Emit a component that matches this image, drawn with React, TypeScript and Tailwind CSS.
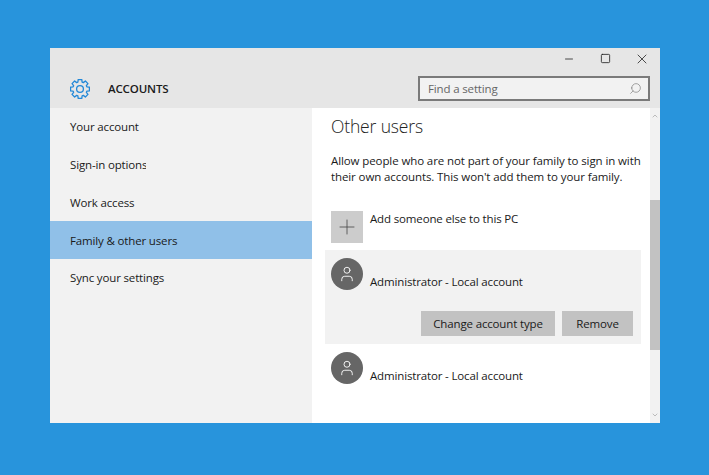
import React from "react";
import { Search, Plus, Minus, Square, X, User, ChevronUp, ChevronDown } from "lucide-react";

const navItems = ["Your account", "Sign-in options", "Work access", "Family & other users", "Sync your settings"];

// 8 tooth gear outline, same look as the windows settings icon
const gearPath = () => {
  const pts: string[] = [];
  for (let i = 0; i < 8; i++) {
    const a = (i * Math.PI) / 4;
    const steps: [number, number][] = [
      [7.2, -0.3],
      [9.6, -0.19],
      [9.6, 0.19],
      [7.2, 0.3],
    ];
    steps.forEach(([r, d]) => {
      pts.push((10 + r * Math.cos(a + d)).toFixed(2) + " " + (10 + r * Math.sin(a + d)).toFixed(2));
    });
  }
  return "M" + pts.join("L") + "Z";
};

const GearIcon = () => (
  <svg width="20" height="20" viewBox="0 0 20 20" fill="none" stroke="#2288d8" strokeWidth="1.3" strokeLinejoin="round">
    <path d={gearPath()} />
    <circle cx="10" cy="10" r="3.4" />
  </svg>
);

const Avatar = () => (
  <div className="w-8 h-8 rounded-full bg-[#666666] flex items-center justify-center shrink-0">
    <User className="w-[18px] h-[18px] text-white" strokeWidth={1.2} />
  </div>
);

const App = () => {
  return (
    <div className="w-[709px] h-[475px] bg-[#2894dc] pt-12 pl-[50px] overflow-hidden font-['Open_Sans',sans-serif] text-[11.5px] tracking-[-0.15px] text-[#1a1a1a]">
      <div className="w-[610px] h-[375px] flex flex-col bg-white">
        <header className="h-[60px] bg-[#e6e6e6] flex flex-col shrink-0">
          <div className="h-[21px] flex justify-end items-center text-[#222222]">
            <div className="w-[37px] flex justify-center"><Minus className="w-3 h-3" strokeWidth={1.6} /></div>
            <div className="w-[37px] flex justify-center"><Square className="w-[11px] h-[11px]" strokeWidth={1.8} /></div>
            <div className="w-[36px] flex justify-center"><X className="w-[16px] h-[16px]" strokeWidth={1.2} /></div>
          </div>
          <div className="flex-1 flex items-center pl-5 pr-[10px]">
            <GearIcon />
            <span className="ml-[18px] font-semibold">ACCOUNTS</span>
            <div className="ml-auto w-[232px] h-[25px] border-2 border-[#7a7a7a] bg-[#f2f2f2] flex items-center justify-between pl-2 pr-1.5">
              <span className="text-[#666666]">Find a setting</span>
              <Search className="w-[13px] h-[13px] text-[#777777] -scale-x-100" strokeWidth={1.2} />
            </div>
          </div>
        </header>

        <div className="flex-1 flex min-h-0">
          <nav className="w-[262px] bg-[#f2f2f2] flex flex-col">
            {navItems.map((item, i) => (
              <div key={item} className={"h-[37.75px] flex items-center pl-5 " + (i === 3 ? "bg-[#90c0e8]" : "")}>
                <span className={i === 1 ? "w-[76px] overflow-hidden whitespace-nowrap" : ""}>{item}</span>
              </div>
            ))}
          </nav>

          <main className="flex-1 flex flex-col pl-[13px] pr-[9px]">
            <h2 className="text-[17.5px] font-light leading-6 mt-[6px] pl-[6px] text-[#222222]">Other users</h2>
            <p className="leading-4 mt-[15px] pl-[6px] tracking-[-0.1px]">
              Allow people who are not part of your family to sign in with their own accounts. This won't add them to your family.
            </p>
            <div className="flex mt-[26px] pl-[6px]">
              <div className="w-8 h-8 bg-[#cccccc] flex items-center justify-center shrink-0">
                <Plus className="w-6 h-6 text-[#444444]" strokeWidth={0.8} />
              </div>
              <span className="ml-[7px] leading-4">Add someone else to this PC</span>
            </div>
            <div className="mt-[7px] h-[94px] bg-[#f2f2f2] px-[6px] pt-2 flex flex-col">
              <div className="flex">
                <Avatar />
                <span className="ml-[7px] mt-[16px] leading-4">Administrator - Local account</span>
              </div>
              <div className="flex justify-end gap-[7px] mt-[21px] pr-[2px]">
                <button className="w-[134px] h-[25px] bg-[#c2c2c2]">Change account type</button>
                <button className="w-[71px] h-[25px] bg-[#c2c2c2]">Remove</button>
              </div>
            </div>
            <div className="flex mt-2 pl-[6px]">
              <Avatar />
              <span className="ml-[7px] mt-[16px] leading-4">Administrator - Local account</span>
            </div>
          </main>

          <div className="w-[10px] bg-[#f2f2f2] flex flex-col items-center">
            <ChevronUp className="w-2 h-2 text-[#a0a0a0] mt-1" />
            <div className="w-full h-[150px] mt-[80px] bg-[#c2c2c2]" />
            <ChevronDown className="w-2 h-2 text-[#a0a0a0] mt-auto mb-1" />
          </div>
        </div>
      </div>
    </div>
  );
};

export default App;
